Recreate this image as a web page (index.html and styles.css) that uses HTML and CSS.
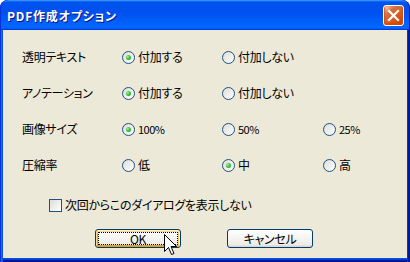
FILE: index.html
```html
<!DOCTYPE html>
<html lang="ja">
<head>
<meta charset="utf-8">
<link rel="stylesheet" href="styles.css">
</head>
<body>
<div class="window">
  <div class="titlebar">
    <span class="title">PDF作成オプション</span>
    <span class="close">
      <svg width="19" height="19" viewBox="0 0 19 19"><path d="M5 5 L14 14 M14 5 L5 14" stroke="#fff" stroke-width="2.2" stroke-linecap="square"/></svg>
    </span>
  </div>
  <div class="client">
    <div class="grid">
      <div class="label">透明テキスト</div>
      <div class="opt"><span class="radio checked"></span>付加する</div>
      <div class="opt"><span class="radio"></span>付加しない</div>
      <div></div>

      <div class="label">アノテーション</div>
      <div class="opt"><span class="radio checked"></span>付加する</div>
      <div class="opt"><span class="radio"></span>付加しない</div>
      <div></div>

      <div class="label">画像サイズ</div>
      <div class="opt"><span class="radio checked"></span><span class="num">100%</span></div>
      <div class="opt"><span class="radio"></span><span class="num">50%</span></div>
      <div class="opt"><span class="radio"></span><span class="num">25%</span></div>

      <div class="label">圧縮率</div>
      <div class="opt"><span class="radio"></span>低</div>
      <div class="opt"><span class="radio checked"></span>中</div>
      <div class="opt"><span class="radio"></span>高</div>
    </div>
    <div class="checkrow"><span class="checkbox"></span>次回からこのダイアログを表示しない</div>
    <div class="buttons">
      <div class="btn default"><span class="focus">OK</span>
        <svg class="cursor" width="14" height="22" viewBox="0 0 14 22"><path d="M0.5 0.5 L0.5 17.5 L4.5 13.5 L7.5 20.5 L10 19.5 L7 12.5 L12.5 12.5 Z" fill="#fff" stroke="#000" stroke-width="1" stroke-linejoin="miter"/></svg>
      </div>
      <div class="btn">キャンセル</div>
    </div>
  </div>
</div>
</body>
</html>
```
FILE: styles.css
```css
html, body {
  margin: 0;
  padding: 0;
  background: #ffffff;
}
body {
  width: 410px;
  height: 262px;
  overflow: hidden;
  font-family: "Noto Sans CJK JP", "Liberation Sans", sans-serif;
  font-size: 12px;
  font-feature-settings: "palt";
  color: #000;
}
.window {
  width: 410px;
  height: 262px;
  display: flex;
  flex-direction: column;
}
.titlebar {
  height: 30px;
  flex: none;
  box-sizing: border-box;
  border-radius: 8px 8px 0 0;
  background: linear-gradient(180deg, #0997ff, #0053ee 8%, #0050ee 40%, #0066ff 88%, #0066ff 93%, #005bff 95%, #003dd7 96%, #003dd7);
  box-shadow: inset 1px 0 0 #0831d9, inset -1px 0 0 #001ea0, inset 0 1px 0 #3d8cff;
  display: flex;
  align-items: center;
  justify-content: space-between;
  padding: 0 6px 0 7px;
}
.title {
  color: #fff;
  font-weight: bold;
  font-size: 12px;
  letter-spacing: 0.8px;
  text-shadow: 1px 1px #0f1089;
  line-height: 1;
  margin-top: 1px;
}
.close {
  width: 21px;
  height: 21px;
  box-sizing: border-box;
  border: 1px solid #fff;
  border-radius: 3px;
  background-image: radial-gradient(circle at 90% 90%, #cc4600 0%, #dc6527 55%, #cd7546 70%, #ffccb2 90%, #fff 100%);
  box-shadow: inset 0 -1px 2px 1px #da4600;
  display: flex;
  align-items: center;
  justify-content: center;
}
.client {
  flex: 1;
  background: #ece9d8;
  box-shadow:
    inset 1px 0 0 #0831d9, inset 2px 0 0 #166aee, inset 3px 0 0 #0855dd,
    inset -1px 0 0 #00138c, inset -2px 0 0 #001ea0, inset -3px 0 0 #003bda,
    inset 0 -1px 0 #00138c, inset 0 -2px 0 #001ea0, inset 0 -3px 0 #003bda, inset 0 -4px 0 #0855dd;
  padding: 9px 0 0 22px;
  display: flex;
  flex-direction: column;
  letter-spacing: -0.3px;
}
.grid {
  display: grid;
  grid-template-columns: 100px 100px 101px 1fr;
  grid-auto-rows: 36px;
  align-items: center;
}
.label, .opt {
  line-height: 14px;
  white-space: nowrap;
}
.opt {
  display: flex;
  align-items: center;
  gap: 3px;
}
.num {
  font-size: 11px;
  letter-spacing: -0.5px;
}
.radio {
  width: 13px;
  height: 13px;
  box-sizing: border-box;
  border: 1px solid #1d5281;
  border-radius: 50%;
  background: linear-gradient(135deg, #dcdcd7, #ffffff);
  position: relative;
  flex: none;
}
.radio.checked::after {
  content: "";
  position: absolute;
  left: 3px;
  top: 3px;
  width: 5px;
  height: 5px;
  border-radius: 50%;
  background: radial-gradient(circle at 35% 35%, #a4f0a2 0%, #3ec23b 45%, #1d9a1d 100%);
}
.checkrow {
  margin: 15px 0 0 27px;
  display: flex;
  align-items: center;
  gap: 3px;
  line-height: 14px;
}
.checkbox {
  width: 13px;
  height: 13px;
  box-sizing: border-box;
  border: 1px solid #1d5281;
  background: linear-gradient(135deg, #dcdcd7, #ffffff);
  flex: none;
}
.buttons {
  display: flex;
  gap: 46px;
  margin: 17px 0 0 73px;
}
.btn {
  width: 86px;
  height: 19px;
  box-sizing: border-box;
  border: 1px solid #003c74;
  border-radius: 3px;
  background: linear-gradient(180deg, #ffffff, #ecebe6 86%, #d6d0c5);
  display: flex;
  align-items: center;
  justify-content: center;
  line-height: 14px;
  position: relative;
}
.btn.default {
  box-shadow: inset -1px 1px #fff0cf, inset 1px 2px #fdd889, inset -2px 2px #fbc761, inset 2px -2px #e5a01a;
}
.focus {
  position: absolute;
  left: 3px;
  top: 3px;
  right: 3px;
  bottom: 3px;
  outline: 1px dotted #000;
  display: flex;
  align-items: center;
  justify-content: center;
}
.cursor {
  position: absolute;
  left: 68px;
  top: 4px;
}
```
